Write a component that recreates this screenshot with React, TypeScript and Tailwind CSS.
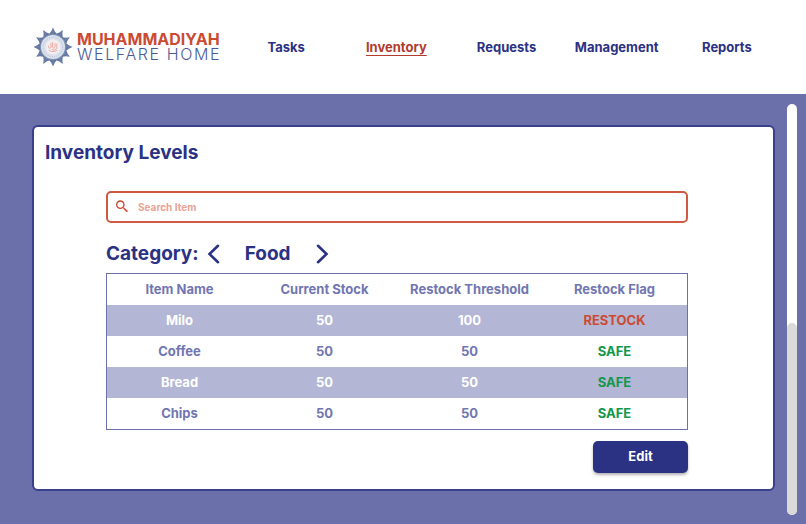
import React, { useState } from "react";

interface InventoryItem {
  name: string;
  stock: number;
  threshold: number;
}

const navItems = ["Tasks", "Inventory", "Requests", "Management", "Reports"];

const categories: { name: string; items: InventoryItem[] }[] = [
  {
    name: "Food",
    items: [
      { name: "Milo", stock: 50, threshold: 100 },
      { name: "Coffee", stock: 50, threshold: 50 },
      { name: "Bread", stock: 50, threshold: 50 },
      { name: "Chips", stock: 50, threshold: 50 },
    ],
  },
];

const rays = Array.from({ length: 12 }, (_, i) => i * 30);

function Logo() {
  return (
    <a href="#home" className="flex items-center gap-1 shrink-0">
      <svg viewBox="-20 -20 40 40" className="size-10" aria-hidden="true">
        {rays.map((deg) => (
          <g key={deg} transform={`rotate(${deg})`}>
            <path d="M0 -19.5 L1.7 -15.8 L4.6 -12 L0 -9 L-4.6 -12 L-1.7 -15.8 Z" fill="#62769f" />
            <path d="M0 -17 L0 -12" stroke="#8797ba" strokeWidth="0.5" />
          </g>
        ))}
        <circle r="13" fill="#8093b6" />
        <circle r="12" fill="#dde2ec" />
        <circle r="9.8" fill="none" stroke="#c3ccdd" strokeWidth="1.4" strokeDasharray="1.2 1" />
        <circle r="8" fill="#f1eef2" stroke="#d3d8e4" strokeWidth="0.5" />
        <g fill="none" stroke="#eba59d" strokeWidth="0.9" strokeLinecap="round">
          <path d="M-4.6 -1 C-4.6 2 -2.4 2 -2 0 V-3.6" />
          <path d="M-0.4 -4.4 V0.4 C0.6 1.8 1.8 1 2 -0.4 V-3.4" />
          <path d="M3.8 -3 V0.8 C3 3.2 0.6 3.4 -0.8 2.6" />
          <path d="M-4 3.4 C-2 5 2 5 4 3.4" />
        </g>
      </svg>
      <span className="flex flex-col text-[16px] leading-[15px]">
        <span className="font-bold text-[#cb4b32]">MUHAMMADIYAH</span>
        <span className="font-light tracking-widest text-[#4a5b92]">WELFARE HOME</span>
      </span>
    </a>
  );
}

export default function App() {
  const [active, setActive] = useState("Inventory");
  const [query, setQuery] = useState("");
  const [index, setIndex] = useState(0);

  const category = categories[index];
  const items = category.items.filter((i) => i.name.toLowerCase().includes(query.toLowerCase()));

  const step = (by: number) => setIndex((index + by + categories.length) % categories.length);

  return (
    <div className="min-h-screen flex flex-col bg-[#6b70aa] font-[Inter,sans-serif] text-[#2b3183]">
      <header className="flex items-center bg-white h-[94px] pl-[33px] pr-6">
        <Logo />
        <nav className="flex-1 grid grid-cols-5 ml-[10px] text-[13px] leading-4 font-bold text-center">
          {navItems.map((item) => (
            <a
              key={item}
              href={`#${item.toLowerCase()}`}
              onClick={() => setActive(item)}
              className={item === active ? "text-[#b23c2b] underline underline-offset-3" : ""}
            >
              {item}
            </a>
          ))}
        </nav>
      </header>

      <main className="flex-1 flex pt-[10px] pb-[9px] pl-8 pr-[9px]">
        <section className="flex-1 mt-[21px] mb-6 mr-3 px-[11px] pt-[14px] bg-white border-2 border-[#3a3f8d] rounded-md">
          <h1 className="text-[19px] leading-6 font-bold">Inventory Levels</h1>

          <div className="pl-[61px] pr-[74px] pt-[26px]">
            <label className="flex items-center h-8 px-1.5 gap-2 border-2 border-[#cf5a44] rounded-[5px]">
              <svg viewBox="0 0 24 24" className="size-4 shrink-0" fill="#cb4b32" aria-hidden="true">
                <path d="M15.5 13h-.79l-.28-.27A6.47 6.47 0 0 0 16 8.5 6.5 6.5 0 1 0 9.5 15c1.61 0 3.09-.59 4.23-1.57l.27.28v.79l5.2 5.2L20.9 18l-5.4-5zm-6 0C7.01 13 5 10.99 5 8.5S7.01 4 9.5 4 14 6.01 14 8.5 11.99 13 9.5 13z" />
              </svg>
              <input
                type="text"
                aria-label="Search Item"
                placeholder="Search Item"
                value={query}
                onChange={(e) => setQuery(e.target.value)}
                className="flex-1 min-w-0 text-[10px] font-bold outline-none placeholder:text-[#e9a397]"
              />
            </label>

            <div className="flex items-center h-[50px] pt-3 text-[19px] leading-6 font-bold">
              <span>Category:</span>
              <button type="button" aria-label="Previous category" onClick={() => step(-1)} className="ml-[7px]">
                <svg viewBox="0 0 16 20" className="w-4 h-5" fill="none" stroke="currentColor" strokeWidth="2.6" strokeLinecap="round">
                  <path d="M12 1.8 L3.5 10 L12 18.2" />
                </svg>
              </button>
              <span className="w-[92px] text-center">{category.name}</span>
              <button type="button" aria-label="Next category" onClick={() => step(1)}>
                <svg viewBox="0 0 16 20" className="w-4 h-5" fill="none" stroke="currentColor" strokeWidth="2.6" strokeLinecap="round">
                  <path d="M4 1.8 L12.5 10 L4 18.2" />
                </svg>
              </button>
            </div>

            <div className="border border-[#6b70aa]">
              <table className="w-full table-fixed text-[13px] leading-[15px] font-bold text-center text-[#7176b2]">
                <thead>
                  <tr>
                    <th className="py-2">Item Name</th>
                    <th className="py-2">Current Stock</th>
                    <th className="py-2">Restock Threshold</th>
                    <th className="py-2">Restock Flag</th>
                  </tr>
                </thead>
                <tbody>
                  {items.map((item) => (
                    <tr key={item.name} className="odd:bg-[#b4b6d5] odd:text-white">
                      <td className="py-2">{item.name}</td>
                      <td className="py-2">{item.stock}</td>
                      <td className="py-2">{item.threshold}</td>
                      {item.stock < item.threshold ? (
                        <td className="py-2 text-[#cb4b32]">RESTOCK</td>
                      ) : (
                        <td className="py-2 text-[#14974a]">SAFE</td>
                      )}
                    </tr>
                  ))}
                </tbody>
              </table>
            </div>

            <div className="flex justify-end mt-[11px]">
              <button
                type="button"
                className="w-[95px] h-8 rounded-[5px] bg-[#2b3183] text-white text-[13px] font-bold shadow-[0_2px_3px_rgba(0,0,0,0.3)]"
              >
                Edit
              </button>
            </div>
          </div>
        </section>

        <div className="flex flex-col w-[10px] rounded-full bg-white" aria-hidden="true">
          <div className="flex-8" />
          <div className="flex-7 rounded-full bg-[#d9d9d9]" />
        </div>
      </main>
    </div>
  );
}
